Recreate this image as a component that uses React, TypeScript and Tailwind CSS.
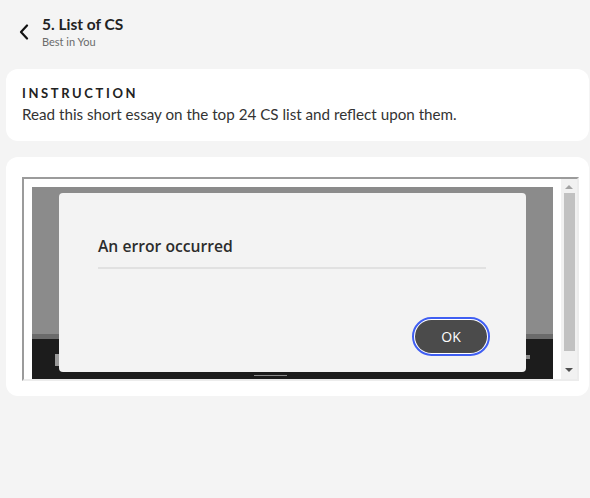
import React from "react";

export default function App() {
  return (
    <div
      className="w-[590px] h-[498px] bg-[#f4f4f4] overflow-hidden"
      style={{ fontFamily: "Lato, 'Open Sans', sans-serif" }}
    >
      {/* Header */}
      <div className="flex items-start h-[69px] pl-[17px] pt-[15px]">
        <svg width="14" height="16" viewBox="0 0 14 16" className="mt-[9px]">
          <path d="M10 1.5 L4 8 L10 14.5" fill="none" stroke="#111" strokeWidth="2.2" strokeLinecap="round" strokeLinejoin="round" />
        </svg>
        <div className="ml-[11px] flex flex-col">
          <div className="text-[15.5px] leading-[19px] font-bold text-[#222]">5. List of CS</div>
          <div className="text-[11px] leading-[15px] text-[#6b6b6b]">Best in You</div>
        </div>
      </div>

      {/* Instruction card */}
      <div className="ml-[6px] w-[583px] h-[72px] bg-white rounded-[12px] px-[16px] pt-[16px]">
        <div className="text-[13px] leading-[16px] font-bold tracking-[2.6px] text-[#222]">INSTRUCTION</div>
        <div className="text-[15.2px] leading-[20px] text-[#333] mt-[3px]">
          Read this short essay on the top 24 CS list and reflect upon them.
        </div>
      </div>

      {/* Content card */}
      <div className="ml-[6px] mt-[16px] w-[583px] h-[239px] bg-white rounded-[12px] pl-[16px] pt-[20px]">
        <div className="w-[557px] h-[204px] border-2 border-t-[#9b9b9b] border-l-[#9b9b9b] border-b-[#ececec] border-r-[#ececec] bg-white flex overflow-hidden">
          <div className="flex-1 p-[8px] overflow-hidden">
            <div className="relative w-[521px] h-[192px] flex flex-col">
              <div className="h-[147px] bg-[#8b8b8b]" />
              <div className="h-[5px] bg-[#6b6b6b]" />
              <div className="flex-1 bg-[#1c1c1c] relative">
                <div className="absolute left-[23px] top-[15px] w-[4px] h-[12px] bg-[#9a9a9a]" />
                <div className="absolute right-[23px] top-[16px] w-[6px] h-[4px] bg-[#8a8a8a]" />
                <div className="absolute left-[222px] bottom-[3px] w-[33px] h-[1px] bg-[#8a8a8a]" />
              </div>
              {/* Modal */}
              <div className="absolute left-[27px] top-[6px] w-[467px] h-[179px] bg-[#f3f3f3] rounded-[4px] px-[39px] pt-[42px] flex flex-col">
                <div
                  className="text-[15.7px] leading-[22px] font-semibold text-[#2c2c2c]"
                  style={{ fontFamily: "'Open Sans', 'Noto Sans', sans-serif" }}
                >
                  An error occurred
                </div>
                <div className="mt-[10px] h-[2px] bg-[#e1e1e1] w-[388px]" />
                <div className="flex justify-end mt-[48px]">
                  <div className="mr-[-3px] rounded-full border-[2px] border-[#3f5ef2] p-[1px] bg-white">
                    <div
                      className="w-[72px] h-[33px] rounded-full bg-[#4b4b4b] text-white text-[14px] flex items-center justify-center"
                      style={{ fontFamily: "'Open Sans', 'Noto Sans', sans-serif" }}
                    >
                      OK
                    </div>
                  </div>
                </div>
              </div>
            </div>
          </div>
          {/* Scrollbar */}
          <div className="w-[16px] bg-[#f1f1f1] flex flex-col items-center">
            <div className="mt-[6px] w-0 h-0 border-l-[4px] border-r-[4px] border-b-[4px] border-l-transparent border-r-transparent border-b-[#a3a3a3]" />
            <div className="mt-[4px] w-[11px] h-[158px] bg-[#c1c1c1]" />
            <div className="mt-[17px] w-0 h-0 border-l-[4px] border-r-[4px] border-t-[4px] border-l-transparent border-r-transparent border-t-[#505050]" />
          </div>
        </div>
      </div>
    </div>
  );
}
